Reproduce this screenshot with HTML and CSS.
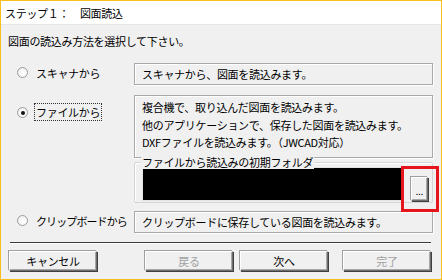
FILE: index.html
```html
<!DOCTYPE html>
<html lang="ja">
<head>
<meta charset="utf-8">
<title>ステップ１：図面読込</title>
<link rel="stylesheet" href="styles.css">
</head>
<body>
<div class="frame">
  <div class="header">ステップ１：　図面読込</div>
  <div class="content">
    <div class="instruction">図面の読込み方法を選択して下さい。</div>

    <div class="opt opt-scanner">
      <div class="opt-label"><span class="radio"></span><span class="label-text">スキャナから</span></div>
      <div class="desc desc-single">スキャナから、図面を読込みます。</div>
    </div>

    <div class="opt opt-file">
      <div class="opt-label opt-label-top"><span class="radio checked"></span><span class="label-text focused">ファイルから</span></div>
      <div class="desc desc-multi">
        <div>複合機で、取り込んだ図面を読込みます。</div>
        <div>他のアプリケーションで、保存した図面を読込みます。</div>
        <div>DXFファイルを読込みます。（JWCAD対応）</div>
      </div>
    </div>

    <div class="group">
      <span class="group-title">ファイルから読込みの初期フォルダ</span>
      <div class="folder-field"></div>
      <div class="btn btn-browse">...</div>
    </div>

    <div class="opt opt-clip">
      <div class="opt-label"><span class="radio"></span><span class="label-text label-narrow">クリップボードから</span></div>
      <div class="desc desc-single">クリップボードに保存している図面を読込みます。</div>
    </div>

    <div class="separator"></div>

    <div class="buttons">
      <div class="btn btn-wide">キャンセル</div>
      <div class="btn btn-wide btn-disabled btn-back">戻る</div>
      <div class="btn btn-wide btn-next">次へ</div>
      <div class="btn btn-wide btn-disabled btn-finish">完了</div>
    </div>
  </div>
  <div class="highlight"></div>
</div>
</body>
</html>
```

FILE: styles.css
```css
* { box-sizing: border-box; }

html, body {
  margin: 0;
  padding: 0;
  background: #ffffff;
}

body {
  font-family: "Noto Sans CJK JP", "Noto Sans", sans-serif;
  font-size: 11px;
  color: #000;
  letter-spacing: -0.3px;
}

.frame {
  position: relative;
  width: 442px;
  height: 280px;
  border: 1px solid #f8bf1c;
  display: flex;
  flex-direction: column;
  overflow: hidden;
}

.header {
  height: 24px;
  line-height: 24px;
  padding-left: 4px;
  background: #ffffff;
  border-bottom: 1px solid #e6e6e6;
  flex: none;
}

.content {
  flex: 1;
  background: #f0f0f0;
  display: flex;
  flex-direction: column;
}

.instruction {
  margin-top: 8px;
  padding-left: 7px;
  line-height: 16px;
  height: 16px;
}

.opt {
  display: flex;
}

.opt-scanner { margin-top: 14px; }
.opt-file { margin-top: 10px; }
.opt-clip { margin-top: 8px; }

.opt-label {
  width: 133px;
  padding-left: 16px;
  display: flex;
  align-items: center;
  gap: 8px;
  margin-top: -3px;
}

.opt-label-top {
  align-items: flex-start;
  margin-top: 9px;
}

.radio {
  flex: none;
  width: 11px;
  height: 11px;
  border-radius: 50%;
  border: 1px solid #9c9c9c;
  background: radial-gradient(circle at 60% 60%, #ffffff 0%, #f4f4f4 60%, #dcdcdc 100%);
  display: flex;
  align-items: center;
  justify-content: center;
}

.opt-label-top .radio { margin-top: 3px; }

.radio.checked::after {
  content: "";
  width: 4px;
  height: 4px;
  border-radius: 50%;
  background: #111;
}

.label-text {
  line-height: 16px;
  white-space: nowrap;
}

.label-narrow {
  letter-spacing: -0.9px;
}

.label-text.focused {
  outline: 1px dotted #333;
  outline-offset: 0;
  padding: 0 1px;
  margin-left: -1px;
}

.desc {
  width: 299px;
  border: 1px solid #a8a8a8;
  box-shadow: inset 1px 1px 0 #ffffff, 1px 1px 0 #ffffff;
  padding-left: 7px;
  white-space: nowrap;
}

.desc-single {
  height: 22px;
  line-height: 20px;
}

.desc-multi {
  height: 63px;
  padding-top: 3px;
  line-height: 17.5px;
}

.group {
  position: relative;
  margin-top: 4px;
  margin-left: 133px;
  width: 299px;
  border: 1px solid #d5d5d5;
  border-radius: 2px;
  box-shadow: inset 1px 1px 0 #ffffff;
  padding: 5px 4px 2px 8px;
  display: flex;
  align-items: flex-end;
  gap: 8px;
}

.group-title {
  position: absolute;
  top: -8px;
  left: 6px;
  padding: 0 1px;
  background: #f0f0f0;
  line-height: 14px;
}

.folder-field {
  width: 260px;
  height: 32px;
  background: #000;
  box-shadow: 0 0 0 1px #e3e3e3;
}

.btn {
  border: 1px solid;
  border-color: #ffffff #6e6e6e #6e6e6e #ffffff;
  background: #f0f0f0;
  box-shadow: inset -1px -1px 0 #a8a8a8, -1px -1px 0 #a0a0a0, 1px 1px 0 #404040;
  display: flex;
  align-items: center;
  justify-content: center;
  white-space: nowrap;
}

.btn-browse {
  width: 17px;
  height: 24px;
  margin-bottom: -1px;
  font-size: 9px;
  letter-spacing: 0;
  padding-top: 4px;
}

.separator {
  margin: 9px 10px 0 9px;
  height: 2px;
  border-top: 1px solid #3a3a3a;
  border-bottom: 1px solid #ffffff;
}

.buttons {
  display: flex;
  margin-top: 7px;
  padding-left: 8px;
}

.btn-wide {
  width: 88px;
  height: 20px;
}

.btn-back { margin-left: 48px; }
.btn-next { margin-left: 7px; }
.btn-finish { margin-left: 15px; }

.btn-disabled {
  color: #a0a0a0;
}

.highlight {
  position: absolute;
  left: 400px;
  top: 165px;
  width: 38px;
  height: 46px;
  border: 3px solid #e8141c;
}
```
